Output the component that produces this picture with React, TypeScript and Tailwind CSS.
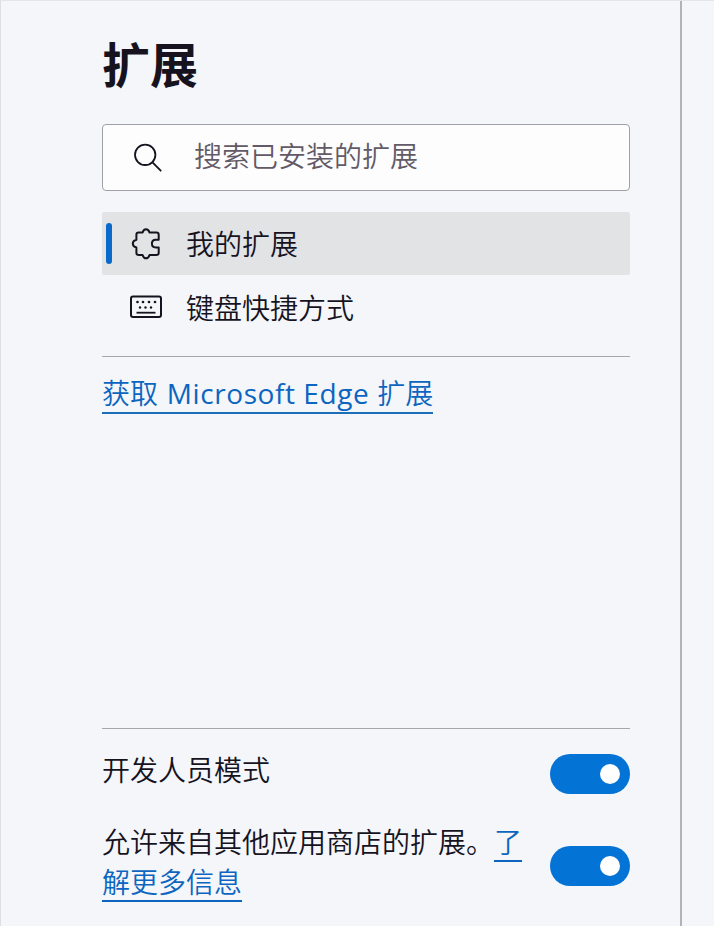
import { useState } from "react"
import type { ReactNode } from "react"

function SearchIcon() {
    return (
        <svg className="w-8 h-8 shrink-0" viewBox="0 0 32 32" fill="none" stroke="#16131f" strokeWidth={1.8} strokeLinecap="round">
            <circle cx="12.2" cy="12.8" r="10.2" />
            <path d="M19.5 20.3l8.2 8.4" />
        </svg>
    )
}

function PuzzleIcon() {
    return (
        <svg className="w-8 h-8 shrink-0" viewBox="0 0 32 32" fill="none" stroke="#16131f" strokeWidth={2} strokeLinejoin="round" strokeLinecap="round">
            <path d="M12.600 4.600C13.200 2.400 14.300 1.300 16 1.300s2.900 1.100 3.500 3.300h7c1.300 0 2.200.9 2.200 2.200v4.900h-2.900c-2.400 0-3.900 1.700-3.900 3.900s1.500 3.900 3.900 3.900h2.900v5.200c0 1.300-.9 2.200-2.200 2.200h-7c-.6 2.200-1.800 3.400-3.500 3.400s-2.800-1.200-3.400-3.400H8.600c-1.300 0-2.200-.9-2.200-2.200v-5.200C4.100 19 2.800 17.700 2.800 15.600s1.300-3.300 3.600-3.900V6.800c0-1.300.9-2.200 2.200-2.200z" />
        </svg>
    )
}

function KeyboardIcon() {
    return (
        <svg className="w-8 h-8 shrink-0" viewBox="0 0 32 32" fill="none" stroke="#16131f" strokeWidth={2}>
            <rect x="1" y="5.5" width="30" height="20.5" rx="2" />
            <path d="M6.500 21.700h19" strokeWidth={1.800} />
            <g fill="#16131f" stroke="none">
                <circle cx="7.500" cy="11" r="1.350" />
                <circle cx="13" cy="11" r="1.350" />
                <circle cx="19" cy="11" r="1.350" />
                <circle cx="25" cy="11" r="1.350" />
                <circle cx="10" cy="16.500" r="1.200" />
                <circle cx="15.500" cy="16.500" r="1.200" />
                <circle cx="21" cy="16.500" r="1.200" />
            </g>
        </svg>
    )
}

function NavItem({ icon, label, active }: { icon: ReactNode; label: string; active?: boolean }) {
    return (
        <a href="#" className={`relative flex items-center h-[63px] pl-7 gap-6 rounded-[2px] ${active ? "bg-[#e2e3e5]" : ""}`}>
            {active && <span className="absolute left-[4px] top-[11px] w-[6px] h-[41px] rounded-full bg-[#0a6acb]" />}
            {icon}
            <span className={active ? "" : "pt-[2px]"}>{label}</span>
        </a>
    )
}

function Toggle({ label }: { label: string }) {
    const [on, setOn] = useState(true)

    return (
        <button
            type="button"
            role="switch"
            aria-checked={on}
            aria-label={label}
            onClick={() => setOn(!on)}
            className={`flex items-center w-20 h-10 px-[10px] rounded-full shrink-0 ${on ? "justify-end bg-[#0473d6]" : "justify-start bg-gray-400"}`}
        >
            <span className="w-5 h-5 rounded-full bg-white" />
        </button>
    )
}

export default function App() {
    return (
        <div className="flex h-[926px] w-full overflow-hidden bg-[#f4f6f9] border-l border-t border-l-[#dcdee2] border-t-[#e4e6ea] text-[28px] leading-10 font-[350] text-[#16131f] font-['Open_Sans','Noto_Sans_CJK_SC',sans-serif]">
            <aside className="flex flex-col w-[681px] shrink-0 pl-[101px] pr-[50px] border-r-2 border-[#b0b3ba]">
                <h1 className="mt-[32px] h-[65px] text-[48px] leading-[64px] font-bold">扩展</h1>

                {/* Search */}
                <label className="mt-[26px] flex items-center h-[67px] pl-[30px] gap-[29px] rounded-[4px] border border-[#a0a1a8] bg-[#fdfdfe]">
                    <SearchIcon />
                    <input
                        type="text"
                        placeholder="搜索已安装的扩展"
                        className="w-full min-w-0 pb-[3px] bg-transparent placeholder-[#625a66] focus:outline-none"
                    />
                </label>

                <nav className="mt-[21px]">
                    <NavItem icon={<PuzzleIcon />} label="我的扩展" active />
                    <NavItem icon={<KeyboardIcon />} label="键盘快捷方式" />
                </nav>

                <div className="mt-[18px] pt-[16px] border-t border-[#a5a7ae]">
                    <a href="#" className="inline-block h-[40px] leading-[38px] border-b-2 border-[#1a6fb8] text-[#0c65c0]">
                        获取<span className="ml-px font-normal tracking-[0.57px]"> Microsoft Edge </span>扩展
                    </a>
                </div>

                {/* Bottom settings */}
                <div className="mt-auto h-[198px] border-t border-[#a5a7ae]">
                    <div className="mt-[25px] flex items-center justify-between h-10">
                        <span className="pb-[8px]">开发人员模式</span>
                        <Toggle label="开发人员模式" />
                    </div>
                    <div className="mt-[28px] flex items-center justify-between">
                        <p className="w-[425px] whitespace-nowrap">
                            允许来自其他应用商店的扩展。
                            <a href="#" className="text-[#0c65c0] underline decoration-2 underline-offset-[7px]">
                                了<br />解更多信息
                            </a>
                        </p>
                        <div className="flex pt-[7px]">
                            <Toggle label="允许来自其他应用商店的扩展" />
                        </div>
                    </div>
                </div>
            </aside>
        </div>
    )
}
